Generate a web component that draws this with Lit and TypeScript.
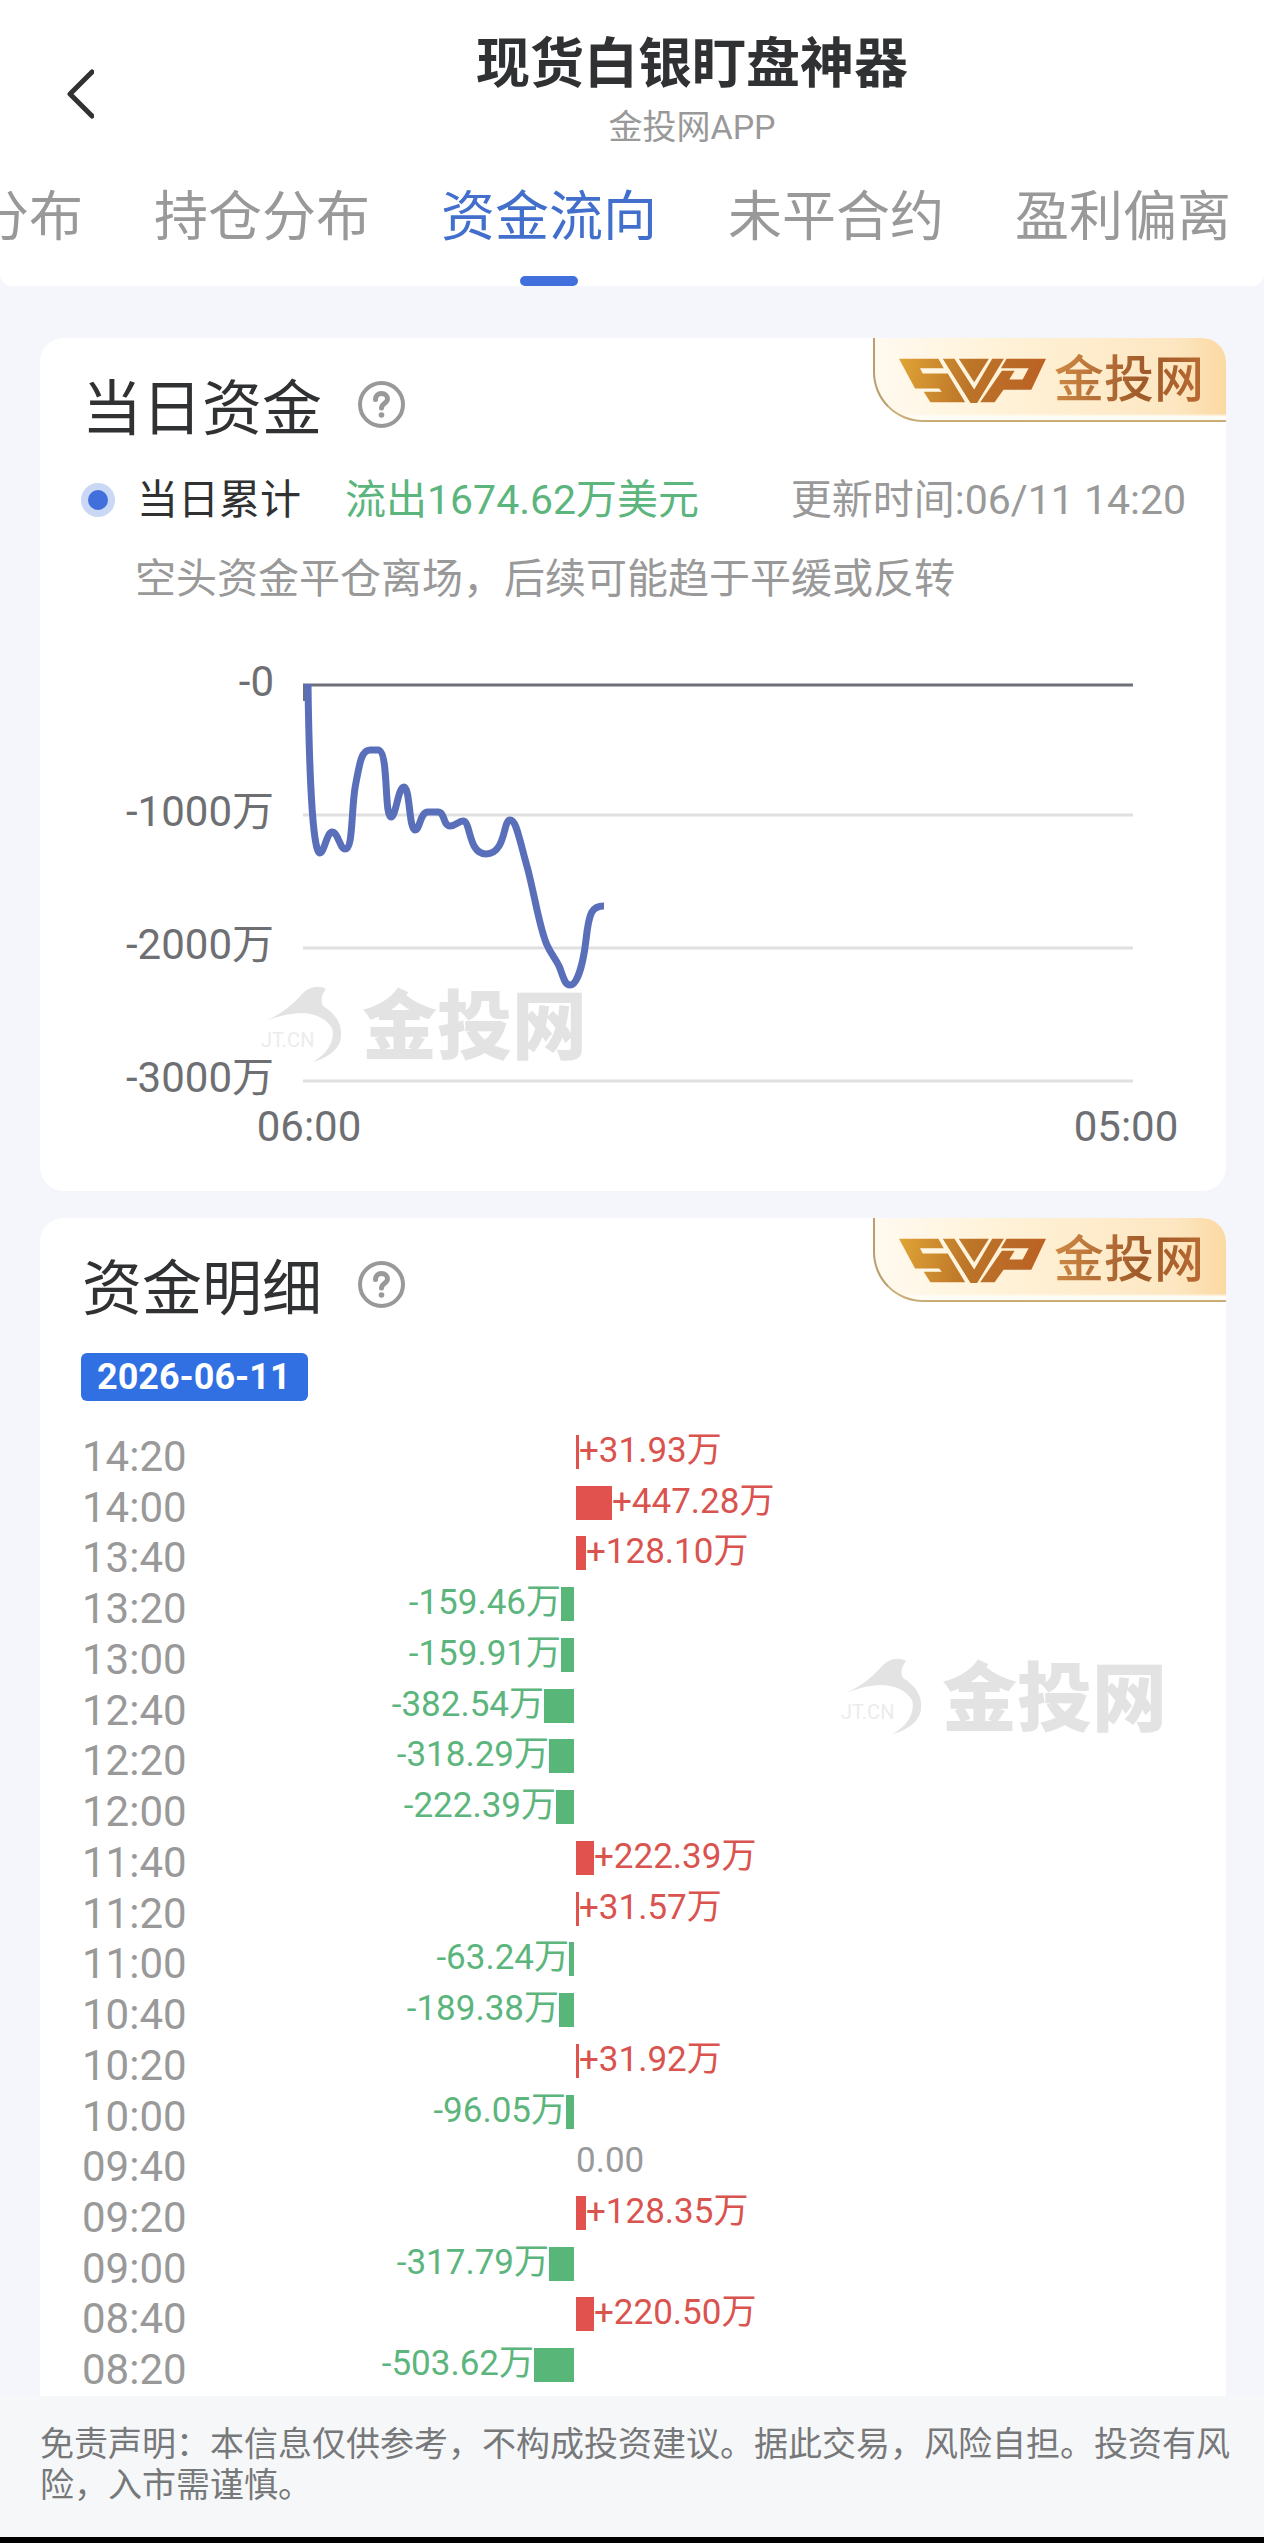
import { css, html, LitElement, nothing, svg } from 'lit'
import { customElement, property, state } from 'lit/decorators.js'
import { classMap } from 'lit/directives/class-map.js'
import { styleMap } from 'lit/directives/style-map.js'

interface FlowRecord {
  time: string
  amount: number
}

const TABS = ['分布', '持仓分布', '资金流向', '未平合约', '盈利偏离']

const RECORDS: FlowRecord[] = [
  { time: '14:20', amount: 31.93 },
  { time: '14:00', amount: 447.28 },
  { time: '13:40', amount: 128.1 },
  { time: '13:20', amount: -159.46 },
  { time: '13:00', amount: -159.91 },
  { time: '12:40', amount: -382.54 },
  { time: '12:20', amount: -318.29 },
  { time: '12:00', amount: -222.39 },
  { time: '11:40', amount: 222.39 },
  { time: '11:20', amount: 31.57 },
  { time: '11:00', amount: -63.24 },
  { time: '10:40', amount: -189.38 },
  { time: '10:20', amount: 31.92 },
  { time: '10:00', amount: -96.05 },
  { time: '09:40', amount: 0 },
  { time: '09:20', amount: 128.35 },
  { time: '09:00', amount: -317.79 },
  { time: '08:40', amount: 220.5 },
  { time: '08:20', amount: -503.62 },
]

const PIXELS_PER_UNIT = 0.0797

const GRID_LINES = [
  { label: '-0', y: 45 },
  { label: '-1000万', y: 175 },
  { label: '-2000万', y: 308 },
  { label: '-3000万', y: 441 },
]

const FLOW_PATH = `
  M268 44 C269 120 272 213 280 213 C284 213 287 192 292 192
  C298 192 300 209 305 209 C313 209 311 175 315 148
  C320 120 322 110 330 110 L338 110 C349 110 344 177 351 177
  C356 177 358 147 364 147 C370 147 369 190 375 190
  C380 190 380 172 388 172 L398 172 C405 172 403 186 410 186
  C416 186 418 181 423 181 C431 181 428 214 446 214
  C466 214 463 180 470 180 C476 180 478 194 488 230
  C496 262 500 290 507 305 C511 314 515 318 519 326
  C523 335 524 345 530 345 C537 345 543 325 546 300
  C549 272 552 266 564 266`

// Grey brand mark, 330 x 80 units
const watermark = svg`
  <path
    fill="#e3e3e4"
    d="M1 38 C20 30 32 22 45 7 C52 0 62 -1 68 3 C64 8 62 14 65 20
       C78 28 84 38 83 50 C83 62 70 72 55 76 C72 66 77 52 74 42
       C68 32 56 27 42 27 C26 28 14 32 1 38Z"
  />
  <text x="3" y="61" font-size="20" fill="#ececec">JT.CN</text>
  <text x="104" y="67" font-size="75" font-weight="900" fill="#e3e3e4">金投网</text>
`

@customElement('brand-badge')
export class BrandBadge extends LitElement {
  static styles = css`
    :host {
      display: flex;
      align-items: center;
      gap: 8px;
      box-sizing: border-box;
      height: 84px;
      padding: 2px 22px 0 24px;
      border-left: 2px solid #b99f6c;
      border-bottom: 2px solid #c9ac76;
      border-bottom-left-radius: 50px;
      background:
        linear-gradient(to bottom, transparent 92%, #fffdf8 96%),
        linear-gradient(to right, #fffaf0, #fff2d8 35%, #fde7c2 85%, #fbd9a3);
    }

    svg {
      width: 147px;
      height: 45px;
    }

    span {
      font-size: 50px;
      font-weight: 500;
      line-height: 60px;
      color: transparent;
      background: linear-gradient(100deg, #d08a45, #a05a2a 60%, #bb6c33);
      background-clip: text;
      -webkit-background-clip: text;
    }
  `

  render() {
    return html`
      <svg viewBox="32 40 440 134" aria-hidden="true">
        <defs>
          <linearGradient id="gold" x1="32" x2="472" y1="40" y2="120" gradientUnits="userSpaceOnUse">
            <stop offset="0" stop-color="#e0a436" />
            <stop offset="0.5" stop-color="#bb7428" />
            <stop offset="1" stop-color="#bb6024" />
          </linearGradient>
        </defs>
        <g fill="url(#gold)">
          <path d="M32 42H150L166 70H95L103 86H178L230 172H126L106 141H160L152 131H80Z" />
          <path d="M163 42H198L257 134L311 42H346L266 174H246Z" />
          <path d="M211 42H301L257 112Z" />
          <path d="M354 42H472L428 135H345L318 172H275L340 78H378L362 104H402L420 70H337Z" />
        </g>
      </svg>
      <span>金投网</span>
    `
  }
}

@customElement('panel-title')
export class PanelTitle extends LitElement {
  static styles = css`
    :host {
      display: flex;
      align-items: flex-start;
      gap: 36px;
    }

    h2 {
      margin: 0;
      padding-top: 4px;
      font-size: 60px;
      font-weight: 400;
      line-height: 72px;
      color: #303133;
    }

    button {
      display: block;
      padding: 11px 0 0;
      border: 0;
      background: none;
    }

    svg {
      display: block;
      width: 47px;
      height: 47px;
    }
  `

  @property()
  text = ''

  render() {
    return html`
      <h2>${this.text}</h2>
      <button type="button" aria-label="说明">
        <svg viewBox="0 0 47 47" fill="none" stroke="#999" stroke-linecap="round">
          <circle cx="23.5" cy="23.5" r="21.5" stroke-width="4" />
          <path
            stroke-width="5"
            d="M17.5 18.5C17.5 14.5 20 12.5 23.5 12.5C27 12.5 29.5 14.7 29.5 18C29.5 22 23.5 22.5 23.5 27"
          />
          <circle cx="23.5" cy="34" r="2.8" fill="#999" stroke="none" />
        </svg>
      </button>
    `
  }
}

@customElement('flow-chart')
export class FlowChart extends LitElement {
  static styles = css`
    :host {
      display: block;
    }

    svg {
      display: block;
      width: 100%;
    }

    .labels {
      font-size: 42px;
      fill: #6e6f72;
    }
  `

  render() {
    return html`
      <svg viewBox="0 0 1186 551" role="img" aria-label="当日资金">
        <g transform="translate(218 346)">${watermark}</g>
        ${GRID_LINES.map(
          ({ y }, index) => svg`
            <path
              d="M263 ${y}H1093"
              stroke=${index === 0 ? '#6e7079' : '#e0e0e2'}
              stroke-width="3"
            />
          `,
        )}
        <path d="M265 45V61" stroke="#6e7079" stroke-width="4" />
        <path d=${FLOW_PATH} fill="none" stroke="#5a6fb9" stroke-width="7" stroke-linejoin="round" />
        <g class="labels" text-anchor="end">
          ${GRID_LINES.map(
            ({ label, y }) => svg`<text x="234" y=${y + 11}>${label}</text>`,
          )}
        </g>
        <g class="labels" text-anchor="middle">
          <text x="269" y="501">06:00</text>
          <text x="1086" y="501">05:00</text>
        </g>
      </svg>
    `
  }
}

@customElement('flow-table')
export class FlowTable extends LitElement {
  static styles = css`
    :host {
      display: block;
    }

    table {
      width: 100%;
      height: 964px;
      table-layout: fixed;
      border-collapse: collapse;
    }

    th,
    td {
      padding: 0;
      vertical-align: top;
    }

    th {
      width: 144px;
      padding-top: 10px;
      font-size: 42px;
      font-weight: 400;
      line-height: 40px;
      text-align: left;
      color: #999;
    }

    .out {
      width: 348px;
      padding-right: 2px;
      color: #5bb57c;
    }

    .in {
      color: #d9534f;
    }

    .zero {
      color: #999;
    }

    .entry {
      display: flex;
      align-items: center;
      height: 50px;
      font-size: 35px;
      line-height: 50px;
      white-space: nowrap;
    }

    .out .entry {
      justify-content: flex-end;
    }

    .bar {
      height: 34px;
      background: #e1514e;
    }

    .out .bar {
      background: #58b778;
    }

    .text {
      height: 52px;
    }
  `

  @property({ attribute: false })
  records: FlowRecord[] = []

  private renderBar(amount: number) {
    const width = `${Math.round(Math.abs(amount) * PIXELS_PER_UNIT)}px`
    return html`<span class="bar" style=${styleMap({ width })}></span>`
  }

  private renderOutflow({ amount }: FlowRecord) {
    return html`
      <div class="entry">
        <span class="text">${amount.toFixed(2)}万</span>
        ${this.renderBar(amount)}
      </div>
    `
  }

  private renderInflow({ amount }: FlowRecord) {
    return html`
      <div class="entry">
        ${this.renderBar(amount)}
        <span class="text">${amount > 0 ? `+${amount.toFixed(2)}万` : '0.00'}</span>
      </div>
    `
  }

  render() {
    return html`
      <table>
        <tbody>
          ${this.records.map(
            (record) => html`
              <tr>
                <th scope="row">${record.time}</th>
                <td class="out">
                  ${record.amount < 0 ? this.renderOutflow(record) : nothing}
                </td>
                <td class=${classMap({ in: true, zero: record.amount === 0 })}>
                  ${record.amount >= 0 ? this.renderInflow(record) : nothing}
                </td>
              </tr>
            `,
          )}
        </tbody>
      </table>
    `
  }
}

@customElement('app-root')
export class AppRoot extends LitElement {
  static styles = css`
    :host {
      display: block;
      font-family: Roboto, 'Noto Sans CJK SC', sans-serif;
      color: #303133;
      background: #f5f6fc;
    }

    button {
      padding: 0;
      border: 0;
      font: inherit;
      color: inherit;
      background: none;
    }

    header {
      padding-top: 29px;
      overflow: hidden;
      border-radius: 0 0 12px 12px;
      background: #fff;
    }

    .bar {
      display: grid;
      grid-template-columns: 120px 1fr;
      align-items: center;
      text-align: center;
    }

    .back {
      padding: 11px 0 0 67px;
    }

    .back svg {
      display: block;
      width: 27px;
      height: 50px;
    }

    h1 {
      margin: 0;
      font-size: 54px;
      font-weight: 700;
      line-height: 72px;
    }

    .subtitle {
      margin: 6px 0 0;
      font-size: 34px;
      line-height: 40px;
      color: #999;
    }

    nav {
      display: flex;
      justify-content: flex-end;
      gap: 71px;
      margin-top: 41px;
      padding-right: 33px;
    }

    .tab {
      display: flex;
      flex-direction: column;
      flex-shrink: 0;
      align-items: center;
      gap: 28px;
      font-size: 54px;
      line-height: 60px;
      white-space: nowrap;
      color: #999;
    }

    .tab::after {
      content: '';
      width: 58px;
      height: 10px;
      border-radius: 5px;
    }

    .tab.active {
      color: #416fcb;
    }

    .tab.active::after {
      background: #4170dc;
    }

    main {
      display: grid;
      gap: 27px;
      padding: 52px 38px 0 40px;
    }

    .card {
      position: relative;
      padding-top: 32px;
      overflow: hidden;
      border-radius: 24px;
      background: #fff;
    }

    .card.open {
      padding-bottom: 5px;
      border-radius: 24px 24px 0 0;
    }

    .card.open .watermark {
      position: absolute;
      top: 440px;
      right: 58px;
      width: 330px;
      height: 80px;
      overflow: visible;
    }

    brand-badge {
      position: absolute;
      top: 0;
      right: 0;
    }

    panel-title {
      padding-left: 42px;
    }

    .summary {
      display: flex;
      align-items: center;
      margin-top: 24px;
      padding: 0 40px 0 41px;
      font-size: 41px;
      line-height: 60px;
    }

    .dot {
      box-sizing: border-box;
      width: 34px;
      height: 34px;
      margin-right: 22px;
      border: 7px solid #cbd8f5;
      border-radius: 50%;
      background: #4170dc;
    }

    .total {
      margin-left: 44px;
      color: #5bb57c;
    }

    .updated {
      margin-left: auto;
      color: #999;
    }

    .note {
      margin: 25px 0 37px;
      padding-left: 95px;
      font-size: 41px;
      line-height: 48px;
      color: #999;
    }

    .date {
      display: block;
      width: fit-content;
      margin: 27px 0 26px 41px;
      padding: 0 17px 0 16px;
      border-radius: 6px;
      font-size: 36px;
      font-weight: 700;
      line-height: 48px;
      color: #fff;
      background: #3070e2;
    }

    flow-table {
      padding: 0 42px;
    }

    footer {
      padding: 28px 30px 31px 40px;
      border-bottom: 6px solid #000;
      font-size: 34px;
      line-height: 41px;
      color: #77787a;
      background: #f6f7f9;
    }

    footer p {
      margin: 0;
    }
  `

  @state()
  private activeTab = '资金流向'

  private renderTab(name: string) {
    return html`
      <button
        type="button"
        class=${classMap({ tab: true, active: name === this.activeTab })}
        @click=${() => (this.activeTab = name)}
      >
        ${name}
      </button>
    `
  }

  render() {
    return html`
      <header>
        <div class="bar">
          <button class="back" type="button" aria-label="返回">
            <svg viewBox="0 0 27 50" fill="none" stroke="#303133" stroke-width="5">
              <path d="M25 3L3 25L25 47" stroke-linecap="round" stroke-linejoin="round" />
            </svg>
          </button>
          <div>
            <h1>现货白银盯盘神器</h1>
            <p class="subtitle">金投网APP</p>
          </div>
        </div>
        <nav>${TABS.map((name) => this.renderTab(name))}</nav>
      </header>

      <main>
        <section class="card">
          <brand-badge></brand-badge>
          <panel-title text="当日资金"></panel-title>
          <div class="summary">
            <span class="dot"></span>
            <span>当日累计</span>
            <span class="total">流出1674.62万美元</span>
            <time class="updated">更新时间:06/11 14:20</time>
          </div>
          <p class="note">空头资金平仓离场，后续可能趋于平缓或反转</p>
          <flow-chart></flow-chart>
        </section>

        <section class="card open">
          <brand-badge></brand-badge>
          <panel-title text="资金明细"></panel-title>
          <time class="date">2026-06-11</time>
          <flow-table .records=${RECORDS}></flow-table>
          <svg class="watermark" viewBox="0 0 330 80" aria-hidden="true">${watermark}</svg>
        </section>
      </main>

      <footer>
        <p>
          免责声明：本信息仅供参考，不构成投资建议。据此交易，风险自担。投资有风险，入市需谨慎。
        </p>
      </footer>
    `
  }
}
